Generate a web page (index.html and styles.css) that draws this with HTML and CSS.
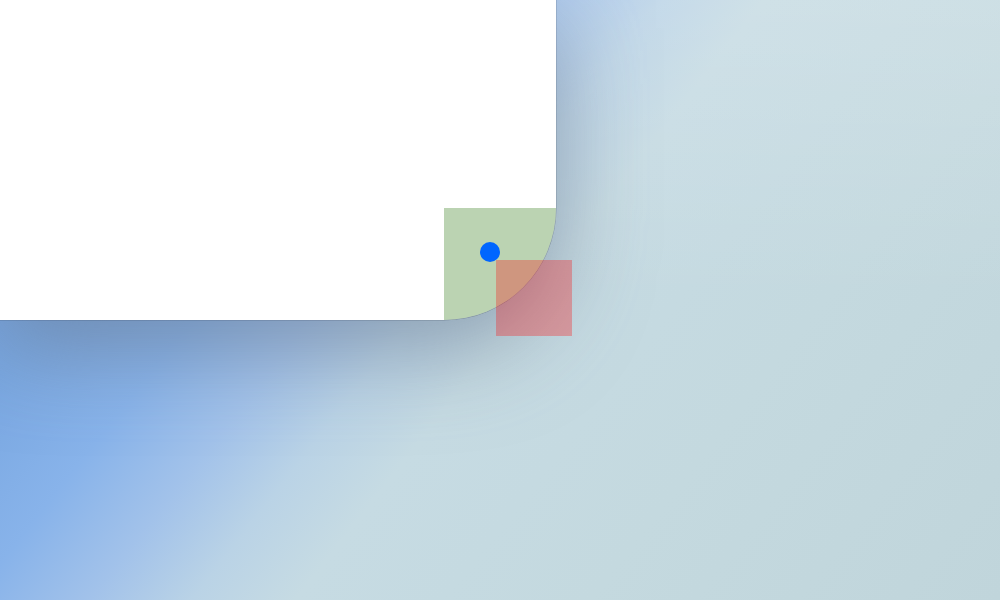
FILE: index.html
```html
<!DOCTYPE html>
<html>
<head>
<meta charset="utf-8">
<title>Corner radius</title>
<link rel="stylesheet" href="styles.css">
</head>
<body>
<div class="desktop">
  <div class="window">
    <div class="corner-mark"></div>
  </div>
  <div class="red-box"></div>
  <div class="dot"></div>
</div>
</body>
</html>
```
FILE: styles.css
```css
html, body {
  margin: 0;
  padding: 0;
  width: 1000px;
  height: 600px;
  overflow: hidden;
  font-family: "Liberation Sans", sans-serif;
}

.desktop {
  position: relative;
  width: 1000px;
  height: 600px;
  background:
    linear-gradient(to bottom, rgba(255, 255, 255, 0.16), rgba(255, 255, 255, 0) 50%),
    linear-gradient(128deg, #6a98da 0%, #7aa8e2 20%, #88b3ea 30%, #a2c2ea 38%, #bad3e6 45%, #c6dbe3 52%, #c4d9df 72%, #c0d5db 100%);
}

.window {
  position: relative;
  width: 556px;
  height: 320px;
  background: #ffffff;
  border-bottom-right-radius: 112px;
  overflow: hidden;
  box-shadow: 0 0 0 0.5px rgba(40, 50, 70, 0.3), 0 28px 90px 0 rgba(100, 115, 135, 0.55);
}

.corner-mark {
  position: absolute;
  right: 0;
  bottom: 0;
  width: 112px;
  height: 112px;
  background: rgba(30, 110, 0, 0.3);
}

.red-box {
  position: absolute;
  left: 496px;
  top: 260px;
  width: 76px;
  height: 76px;
  background: rgba(255, 10, 10, 0.3);
}

.dot {
  position: absolute;
  left: 480px;
  top: 242px;
  width: 20px;
  height: 20px;
  border-radius: 50%;
  background: #0066ff;
}
```
